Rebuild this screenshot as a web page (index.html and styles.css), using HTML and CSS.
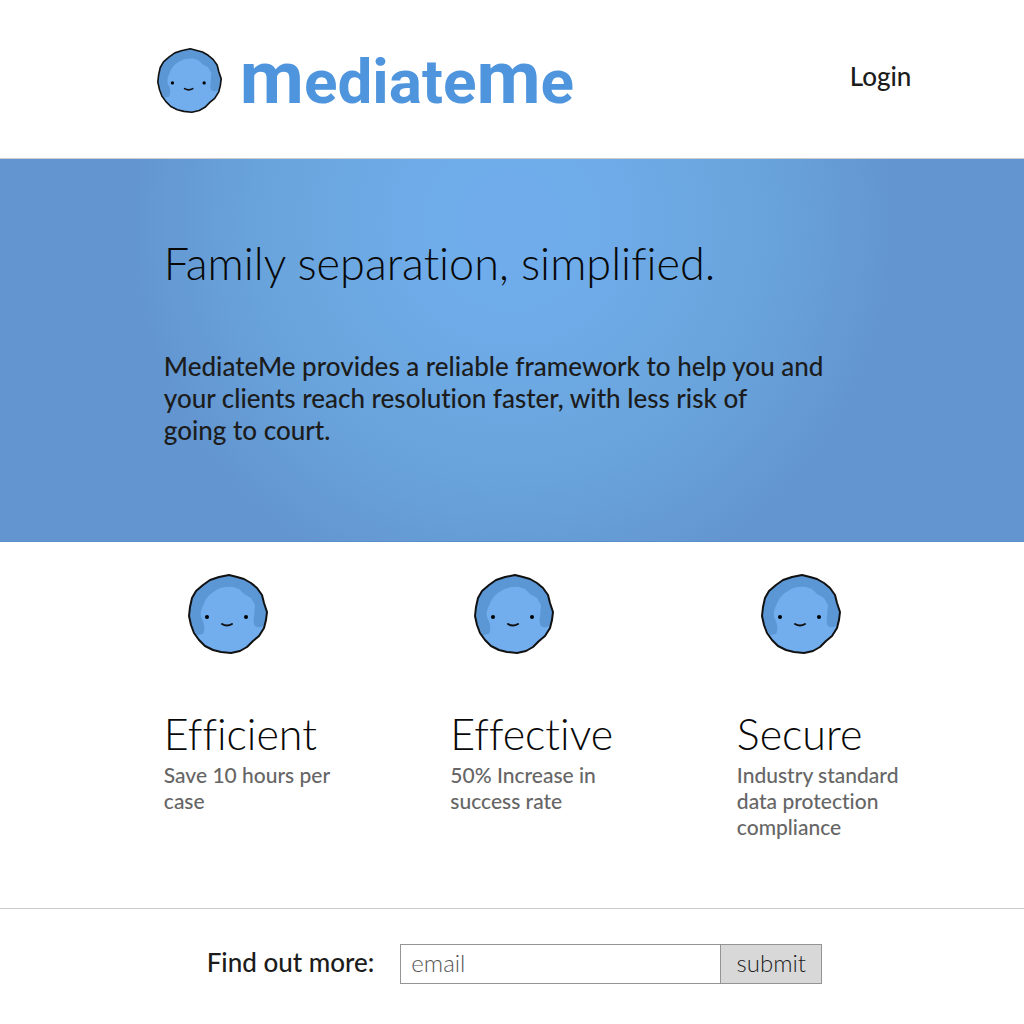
FILE: index.html
```html
<!DOCTYPE html>
<html lang="en">
<head>
<meta charset="utf-8">
<meta name="viewport" content="width=device-width, initial-scale=1">
<title>MediateMe</title>
<link rel="stylesheet" href="styles.css">
</head>
<body>
<svg class="sprite" aria-hidden="true">
  <symbol id="face" viewBox="0 0 80 80">
    <path fill="#72adee" d="M41 1L49 3 56 5 63 9 69 14 74 21 76 29 79 38 78 46 76 54 71 62 65 67 59 73 52 77 43 79 33 78 25 76 17 72 11 66 6 59 3 51 1 42 2 33 4 24 8 17 15 11 22 6 31 3Z"/>
    <path fill="#5b96d5" d="M41 1L49 3 56 5 63 9 69 14 74 21 76 29 79 38 78 46 76 51Q72 55 67 52Q65 50 66 43L67 31 63 24 56 20 51 15 45 13Q34 12 27 17Q21 20 17 27L14 34Q12 38 13 43L16 50Q17 56 15 60L9 61 3 51 1 42 2 33 4 24 8 17 15 11 22 6 31 3Z"/>
    <path fill="none" stroke="#111" stroke-width="2" stroke-linejoin="round" d="M41 1L49 3 56 5 63 9 69 14 74 21 76 29 79 38 78 46 76 54 71 62 65 67 59 73 52 77 43 79 33 78 25 76 17 72 11 66 6 59 3 51 1 42 2 33 4 24 8 17 15 11 22 6 31 3Z"/>
    <circle cx="19" cy="43" r="2"/>
    <circle cx="58" cy="43" r="2"/>
    <path fill="none" stroke="#111" stroke-width="2" stroke-linecap="round" d="M34 50Q39 53 44 50"/>
  </symbol>
</svg>

<header class="header wrap">
  <a class="brand" href="#">
    <svg class="brand-face" aria-hidden="true"><use href="#face"/></svg>
    <span class="wordmark"><span class="tall">m</span>ediate<span class="tall">m</span>e</span>
  </a>
  <a class="login" href="#">Login</a>
</header>

<main>
  <section class="hero wrap">
    <h1 class="title">Family separation, simplified.</h1>
    <p class="lead">MediateMe provides a reliable framework to help you and<br>your clients reach resolution faster, with less risk of<br>going to court.</p>
  </section>

  <section class="features wrap">
    <article class="feature">
      <svg class="feature-face" aria-hidden="true"><use href="#face"/></svg>
      <h2 class="title subtitle">Efficient</h2>
      <p class="note">Save 10 hours per case</p>
    </article>
    <article class="feature">
      <svg class="feature-face" aria-hidden="true"><use href="#face"/></svg>
      <h2 class="title subtitle">Effective</h2>
      <p class="note">50% Increase in success rate</p>
    </article>
    <article class="feature">
      <svg class="feature-face" aria-hidden="true"><use href="#face"/></svg>
      <h2 class="title subtitle">Secure</h2>
      <p class="note">Industry standard data protection compliance</p>
    </article>
  </section>
</main>

<footer class="footer">
  <form class="signup">
    <label class="signup-label" for="email">Find out more:</label>
    <div class="signup-field">
      <input class="signup-input" id="email" type="email" placeholder="email">
      <button class="signup-button" type="submit">submit</button>
    </div>
  </form>
</footer>
</body>
</html>
```

FILE: styles.css
```css
* {
  box-sizing: border-box;
}

body {
  margin: 0;
  background: #fff;
  color: #1c1c1c;
  font-family: Lato, "Liberation Sans", sans-serif;
  font-size: 26px;
  font-weight: 500;
  font-variant-ligatures: none;
  line-height: 32px;
}

h1, h2, p {
  margin: 0;
}

a {
  color: inherit;
  text-decoration: none;
}

.sprite {
  display: none;
}

.wrap {
  padding-left: 16%;
  padding-right: 11%;
}

.title {
  color: #080808;
  font-size: 45px;
  font-weight: 300;
  line-height: 56px;
}

.subtitle {
  font-size: 43px;
}

.header {
  display: flex;
  align-items: center;
  justify-content: space-between;
  min-height: 159px;
  padding-top: 2px;
  border-bottom: 1px solid #ccc;
}

.brand {
  display: flex;
  align-items: center;
  gap: 18px;
  margin-left: -7px;
}

.brand-face {
  width: 65px;
  height: 65px;
}

.wordmark {
  color: #4f95de;
  font-family: Roboto, "Liberation Sans", sans-serif;
  font-size: 62px;
  font-weight: 700;
  line-height: 80px;
}

.tall {
  font-size: 74px;
}

.login {
  padding-bottom: 8px;
}

.hero {
  min-height: 383px;
  padding-top: 76px;
  padding-bottom: 94px;
  border-bottom: 1px solid #5c8fc9;
  background: radial-gradient(circle at 50% 64px, #70acec 0, #6facea 80px, #6ca8e2 170px, #69a3db 260px, #6396d0 380px);
}

.lead {
  margin-top: 59px;
}

.features {
  display: grid;
  grid-template-columns: repeat(3, minmax(0, 1fr));
  column-gap: 112px;
  padding-top: 32px;
  padding-bottom: 68px;
}

.feature-face {
  display: block;
  width: 80px;
  height: 80px;
  margin: 0 0 52px 24px;
}

.note {
  color: #666;
  font-size: 21px;
  line-height: 26px;
}

.footer {
  padding: 35px 16px 40px 21px;
  border-top: 1px solid #ccc;
}

.signup {
  display: flex;
  align-items: center;
  justify-content: center;
  gap: 26px;
}

.signup-label {
  padding-bottom: 5px;
}

.signup-field {
  display: flex;
}

.signup-input,
.signup-button {
  height: 40px;
  margin: 0;
  border: 1px solid #949494;
  border-radius: 0;
  color: #1c1c1c;
  font: 300 24px/32px Lato, "Liberation Sans", sans-serif;
}

.signup-input {
  width: 321px;
  padding: 0 10px 4px;
  background: #fff;
}

.signup-input::placeholder {
  color: #555;
}

.signup-button {
  width: 102px;
  margin-left: -1px;
  padding: 0 0 2px;
  background: #d8d8d8;
}
```
